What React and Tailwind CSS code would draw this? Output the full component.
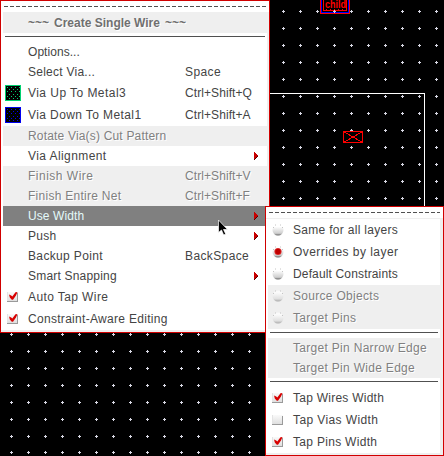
import React from "react";

function Arrow() {
  return (
    <svg className="ml-auto mr-[9px] shrink-0" width="4" height="8" shapeRendering="crispEdges">
      <path d="M0 0h1v1h1v1h1v1h1v2h-1v1h-1v1h-1v1h-1z" fill="#c80000" />
      <path d="M3 4h1v1h-1v1h-1v1h-1v1h-1v-1h1v-1h1v-1h1z" fill="#500" />
    </svg>
  );
}

function Check({ on }) {
  return (
    <svg width="12" height="12" viewBox="0 0 12 12" className="shrink-0 overflow-visible">
      <defs>
        <linearGradient id="cb" x2="0" y2="1">
          <stop offset="0" stopColor="#fafafa" />
          <stop offset="1" stopColor="#dcdcdc" />
        </linearGradient>
      </defs>
      <rect x="1" y="1" width="10" height="10" fill="url(#cb)" />
      <path d="M0.5 1v9" stroke="#e4e4e4" />
      <path d="M0 10.5h11M10.5 2v9" stroke="#9a9a9a" />
      {on && <path d="M2 3.500 4.200 4.600 5.300 5.600 8.500 1.200 10.500 1 9 4.500 6 8.700 4.800 8.700 2.800 6.500Z" fill="#d80000" />}
    </svg>
  );
}

function Radio({ on, dim }) {
  return (
    <svg width="12" height="12" viewBox="0 0 12 12" className="shrink-0">
      <defs>
        <linearGradient id="rb" x2="0" y2="1">
          <stop offset="0.2" stopColor="#ffffff" />
          <stop offset="0.5" stopColor="#e6e6e6" />
          <stop offset="0.8" stopColor="#cfcfcf" />
          <stop offset="1" stopColor="#606060" />
        </linearGradient>
        <linearGradient id="rd" x2="0" y2="1">
          <stop offset="0.2" stopColor="#fafafa" />
          <stop offset="0.75" stopColor="#e0e0e0" />
          <stop offset="1" stopColor="#a8a8a8" />
        </linearGradient>
      </defs>
      <circle cx="6" cy="6" r="5.5" fill={dim ? "url(#rd)" : "url(#rb)"} />
      <path d="M3 1h1M8 1h1M1 3.500h1M10 3.500h1" stroke="#c4c4c4" />
      {on && (
        <>
          <circle cx="6" cy="5.500" r="3.600" fill="#e03030" />
          <circle cx="6" cy="5.500" r="2.700" fill="#c00000" />
        </>
      )}
    </svg>
  );
}

function Via({ color }) {
  const dots = [];
  for (let y = 0; y < 6; y++)
    for (let x = 0; x < 4; x++) dots.push([2 + x * 4 + (y % 2) * 2, 2 + y * 2 + (y > 2 ? 1 : 0)]);
  return (
    <svg width="16" height="16" shapeRendering="crispEdges" className="shrink-0">
      <rect width="16" height="16" fill={color} />
      <rect x="1" y="1" width="14" height="14" fill="#000" />
      {dots.filter(([x]) => x < 15).map(([x, y]) => (
        <rect key={x + "-" + y} x={x} y={y} width="1" height="1" fill={color} />
      ))}
    </svg>
  );
}

function Dashes() {
  return (
    <div className="h-[11px] shrink-0 bg-white pl-[3px] pr-[3px] pt-[5px]">
      <div className="h-px bg-[repeating-linear-gradient(90deg,#505050_0_4px,transparent_4px_6px)]" />
    </div>
  );
}

function Rule() {
  return <div className="mx-0.5 mb-[5px] mt-[3px] h-px shrink-0 bg-[#505050]" />;
}

const tones = {
  normal: "bg-white text-[#444444]",
  dim: "bg-[#efefef] text-[#808080] [text-shadow:1px_1px_0_#fff]",
  active: "bg-[#808080] text-[#e4fafa]",
};

function Row({ label, keys, icon, arrow, tone = "normal", h = "h-5", ls = "tracking-[0.3px]", ks = "tracking-[0.08px]" }) {
  return (
    <div className={`flex shrink-0 items-center ${h} ${tones[tone]}`}>
      <div className="flex w-[25px] shrink-0 pl-0.5">{icon}</div>
      <div className={`shrink-0 ${keys ? "w-[157px]" : ""} ${ls}`}>{label}</div>
      {keys && <div className={ks}>{keys}</div>}
      {arrow && <Arrow />}
    </div>
  );
}

function Tick({ on }) {
  return (
    <div className="pl-0.5">
      <Check on={on} />
    </div>
  );
}

function Dot({ on, dim }) {
  return (
    <div className="pl-0.5">
      <Radio on={on} dim={dim} />
    </div>
  );
}

function Canvas() {
  const marks = [];
  for (let r = 0; r < 27; r++)
    for (let c = 0; c < 26; c++) marks.push([11 + c * 17 - (c > 25 ? 1 : 0), r === 26 ? 452 : 11 + r * 17]);
  return (
    <svg className="absolute inset-0" width="444" height="456" shapeRendering="crispEdges">
      <rect width="444" height="456" fill="#000" />
      <path d="M320.5 0V13.5H349.5V0" fill="none" stroke="#f00" />
      <path d="M321.5 0V12.5H348.5V0" fill="none" stroke="#00f" strokeWidth="1" />
      <path d="M323.5 0V10.5H346.5V0" fill="none" stroke="#f00" />
      <text x="325" y="8" fill="#f00" fontSize="11" fontWeight="bold" fontFamily="Liberation Sans, sans-serif" textLength="21" lengthAdjust="spacingAndGlyphs">child</text>
      <path d="M326 9.500h20" stroke="#f00" strokeDasharray="1 3" />
      <path d="M269 93.5H424.5V208" fill="none" stroke="#fff" />
      <path d={marks.map(([x, y]) => `M${x - 1} ${y}h3v1h-3zM${x} ${y - 1}h1v3h-1z`).join("")} fill="#d8d8e4" />
      <path d="M343.5 131.5h19v11h-19zl19 11m-19 0 19-11" fill="none" stroke="#f00" />
    </svg>
  );
}

export default function App() {
  return (
    <div className="relative h-[456px] w-[444px] overflow-hidden whitespace-nowrap bg-black font-['Liberation_Sans',Arial,sans-serif] text-[12px] leading-none">
      <Canvas />
      <div className="absolute left-0 top-0 flex h-[333px] w-[270px] flex-col border border-[#d00000] bg-[#efefef]">
        <Dashes />
        <div className="mr-0.5 flex grow flex-col bg-white pl-0.5">
          <div className="-mr-0.5 flex h-[21px] shrink-0 items-center gap-[5px] bg-[#efefef] pl-[25px] font-bold text-[#707070] [text-shadow:1px_1px_0_#fff]">
            <span>~~~</span>
            <span>Create Single Wire</span>
            <span>~~~</span>
          </div>
          <Rule />
          <Row label="Options..." ls="tracking-[0.05px]" />
          <Row label="Select Via..." keys="Space" ls="tracking-[0.25px]" ks="tracking-[0.4px]" />
          <Row label="Via Up To Metal3" keys="Ctrl+Shift+Q" icon={<Via color="#00d070" />} h="h-[22px]" ls="tracking-[0.45px]" />
          <Row label="Via Down To Metal1" keys="Ctrl+Shift+A" icon={<Via color="#0000f0" />} h="h-[22px]" ls="tracking-[0.4px]" />
          <Row label="Rotate Via(s) Cut Pattern" tone="dim" ls="tracking-[0.18px]" />
          <Row label="Via Alignment" arrow ls="tracking-[0.42px]" />
          <Row label="Finish Wire" keys="Ctrl+Shift+V" tone="dim" ls="tracking-[0.5px]" />
          <Row label="Finish Entire Net" keys="Ctrl+Shift+F" tone="dim" ls="tracking-[0.27px]" />
          <Row label="Use Width" tone="active" arrow ls="tracking-[0.1px]" />
          <Row label="Push" arrow />
          <Row label="Backup Point" keys="BackSpace" ls="tracking-[0.35px]" ks="tracking-[0.38px]" />
          <Row label="Smart Snapping" arrow ls="tracking-[0.2px]" />
          <Row label="Auto Tap Wire" icon={<Tick on />} h="h-[22px]" ls="tracking-[0.4px]" />
          <Row label="Constraint-Aware Editing" icon={<Tick on />} h="h-[22px]" />
        </div>
        <div className="h-0.5 shrink-0" />
      </div>

      <div className="absolute left-[265px] top-[206px] flex h-[250px] w-[179px] flex-col border border-[#d00000] bg-[#efefef]">
        <Dashes />
        <div className="mr-[3px] mt-px flex grow flex-col bg-white pl-0.5">
          <Row label="Same for all layers" icon={<Dot />} h="h-[22px]" />
          <Row label="Overrides by layer" icon={<Dot on />} h="h-[22px]" ls="tracking-[0.45px]" />
          <Row label="Default Constraints" icon={<Dot />} h="h-[22px]" ls="tracking-[0.15px]" />
          <Row label="Source Objects" icon={<Dot dim />} tone="dim" h="h-[22px]" />
          <Row label="Target Pins" icon={<Dot dim />} tone="dim" h="h-[22px]" />
          <Rule />
          <Row label="Target Pin Narrow Edge" tone="dim" />
          <Row label="Target Pin Wide Edge" tone="dim" />
          <Rule />
          <Row label="Tap Wires Width" icon={<Tick on />} h="h-[22px]" ls="tracking-[0.25px]" />
          <Row label="Tap Vias Width" icon={<Tick />} h="h-[22px]" ls="tracking-[0.4px]" />
          <Row label="Tap Pins Width" icon={<Tick on />} h="h-[22px]" />
        </div>
        <div className="h-0.5 shrink-0" />
      </div>

      <svg className="absolute left-[217px] top-[219px]" width="12" height="18" viewBox="0 0 12 18">
        <path d="M1.5 1v12.5l3-2.5 2.2 5 2-1-2.200-4.500h4z" fill="#000" stroke="#fff" strokeWidth=".7" />
      </svg>
    </div>
  );
}
